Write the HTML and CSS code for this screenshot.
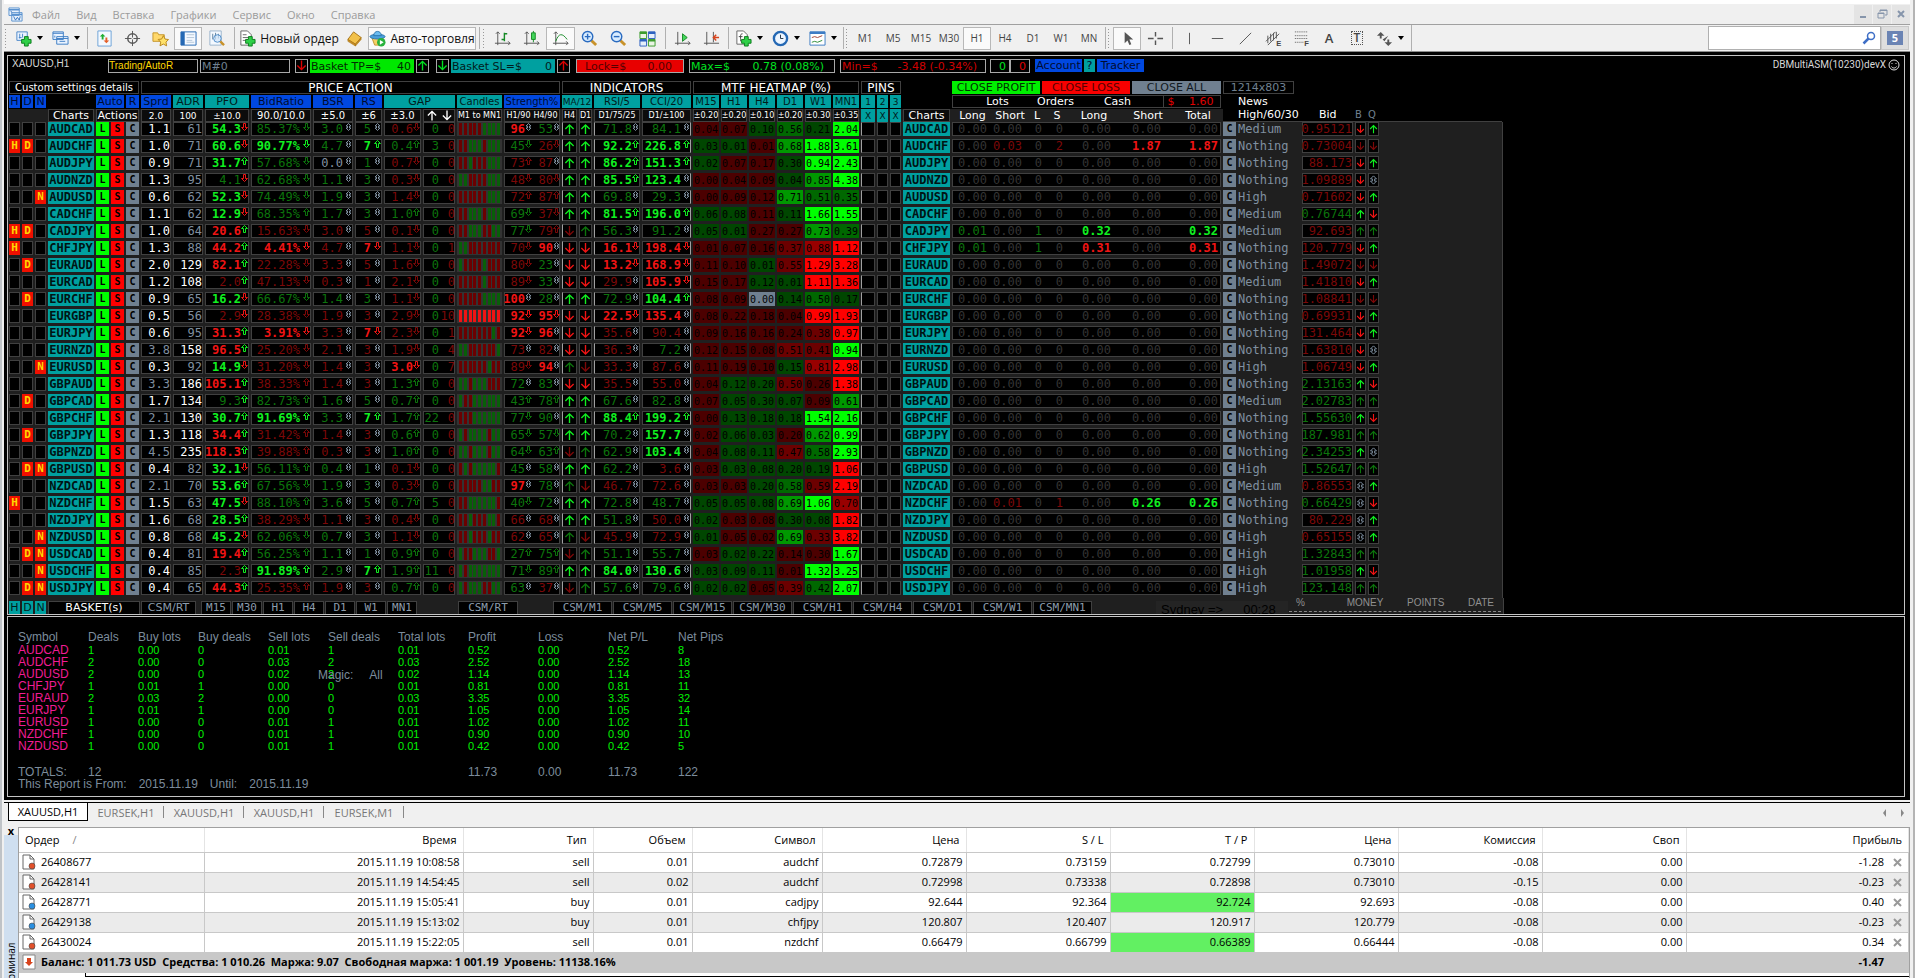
FILE: index.html
```html
<!DOCTYPE html>
<html lang="ru">
<head>
<meta charset="utf-8">
<title>XAUUSD,H1</title>
<link rel="stylesheet" href="styles.css">
</head>
<body>
<svg class="sprite" aria-hidden="true">
  <symbol id="up" viewBox="0 0 12 12"><path d="M6 11.500V1.500M1.500 6 6 1.500 10.500 6" fill="none" stroke="currentColor" stroke-width="1.500"/></symbol>
  <symbol id="down" viewBox="0 0 12 12"><path d="M6 .5V10.500M1.500 6 6 10.500 10.500 6" fill="none" stroke="currentColor" stroke-width="1.500"/></symbol>
  <symbol id="both" viewBox="0 0 12 12"><path d="M6 .5 10 4.500H7.500V7.500H10L6 11.500 2 7.500H4.500V4.500H2Z" fill="none" stroke="currentColor" stroke-width="1.300"/></symbol>
  <symbol id="hup" viewBox="0 0 7 8"><path d="M3.500 .5 6.500 3.500H4.500V7.500H2.500V3.500H.5Z" fill="none" stroke="currentColor"/></symbol>
  <symbol id="hdown" viewBox="0 0 7 8"><path d="M3.500 7.500 6.500 4.500H4.500V.5H2.500V4.500H.5Z" fill="none" stroke="currentColor"/></symbol>
  <symbol id="hboth" viewBox="0 0 7 8"><path d="M3.500 .5 6 3H4.500V5H6L3.500 7.500 1 5H2.500V3H1Z" fill="none" stroke="currentColor"/></symbol>
  <symbol id="plus" viewBox="0 0 12 12"><path d="M4 1h4v3h3v4H8v3H4V8H1V4h3Z" fill="#2fd048" stroke="#0b7a1c"/></symbol>
  <symbol id="lens" viewBox="0 0 18 18"><path d="m11 11 5 5" stroke="#c8922a" stroke-width="3"/><circle cx="7" cy="7" r="5.500" fill="#d8ecff" stroke="#2a6bc0" stroke-width="1.500"/></symbol>
</svg>

<nav class="menubar">
  <svg class="app" viewBox="0 0 16 16"><path d="M1 1h11v8H1zM4 6h11v9H4z" fill="#e8f1fc" stroke="#5a92cf"/><path d="M1 3h11M4 8h11" stroke="#5a92cf" stroke-width="1.500"/><path d="m6 10 2 4 2-3 2 3 1-4M3 4l1 2" fill="none" stroke="#3775bd"/></svg>
  <a href="#">Файл</a><a href="#">Вид</a><a href="#">Вставка</a><a href="#">Графики</a><a href="#">Сервис</a><a href="#">Окно</a><a href="#">Справка</a>
  <span class="grow"></span>
  <button class="win" aria-label="Свернуть"><svg viewBox="0 0 12 12"><path d="M3 9h6" stroke="#8695ab" stroke-width="2"/></svg></button>
  <button class="win" aria-label="Восстановить"><svg viewBox="0 0 12 12"><path d="M4 4V2h7v5H9M2 5h6v5H2zM4 2.500h7M2 5.500h6" fill="none" stroke="#8695ab"/></svg></button>
  <button class="win" aria-label="Закрыть"><svg viewBox="0 0 12 12"><path d="m3 3 6 6m0-6-6 6" stroke="#8695ab" stroke-width="2"/></svg></button>
</nav>

<div class="toolbar">
  <i class="grip"></i>
  <button class="tb drop" aria-label="Новый график"><svg viewBox="0 0 18 18"><path d="M2 2h11v9H2z" fill="#eaf3ff" stroke="#4a86c8"/><path d="M5 4v5m3-5v4m-4 0h3" stroke="#4a86c8"/><use href="#plus" x="6" y="6" width="12" height="12"/></svg></button>
  <button class="tb drop" aria-label="Профили"><svg viewBox="0 0 18 18"><path d="M1 2h11v8H1zM5 7h12v8H5z" fill="#eaf3ff" stroke="#3d7cc4"/><path d="M1 3.500h11M5 9h12M8 12h6M3 6v2" stroke="#3d7cc4"/></svg></button>
  <i class="sep"></i>
  <button class="tb" aria-label="Обзор рынка"><svg viewBox="0 0 18 18"><path d="M2 1h14v16H2z" fill="#f4f9ff" stroke="#6ba2d8"/><path d="m7 4 3 3H8v3H6V7H4z" fill="#1fae33"/><path d="m11 14-3-3h2V8h2v3h2z" fill="#e5602a"/></svg></button>
  <button class="tb" aria-label="Окно данных"><svg viewBox="0 0 18 18"><circle cx="9" cy="9" r="5" fill="none" stroke="#555" stroke-width="1.500"/><path d="M9 1v7M9 10v7M1 9h7M10 9h7" stroke="#555"/></svg></button>
  <button class="tb" aria-label="Навигатор"><svg viewBox="0 0 18 18"><path d="M1 3h5l1 2h6v7H1z" fill="#ffd86b" stroke="#c5952a"/><path d="m12 6 1.800 3.600 3.700.5-2.700 2.700.7 4-3.500-1.900-3.500 1.900.7-4L6.500 10l3.700-.4z" fill="#ffe26b" stroke="#b8861a"/></svg></button>
  <button class="tb on" aria-label="Терминал"><svg viewBox="0 0 18 18"><path d="M1 2h16v14H1z" fill="#f4f9ff" stroke="#2468b4"/><path d="M1 2h4v14H1z" fill="#2468b4"/><path d="M7 5h8M7 8h8M7 11h6M7 13h8" stroke="#b4c6d8"/></svg></button>
  <button class="tb" aria-label="Тестер"><svg viewBox="0 0 18 18"><path d="M2 1h12v15H2z" fill="#f4f9ff" stroke="#9ab4cc"/><path d="M5 4v6m3-7v7m3-6v5" stroke="#5c7f9e"/><circle cx="10" cy="9" r="4" fill="#cfe4fa" fill-opacity=".7" stroke="#4f8cc9"/><path d="m13 12 4 4" stroke="#c8922a" stroke-width="2.500"/></svg></button>
  <i class="sep wide"></i>
  <button class="tb text order"><svg viewBox="0 0 18 18"><path d="M2 1h7l4 4v11H2z" fill="#fff" stroke="#666"/><path d="M4 5h4M4 8h6M4 11h3" stroke="#666"/><use href="#plus" x="6" y="6" width="12" height="12"/></svg>Новый ордер</button>
  <button class="tb" aria-label="MetaEditor"><svg viewBox="0 0 18 18"><path d="m8 2 8 6-6 7-8-5z" fill="#f2c14a" stroke="#a87416"/><path d="m2 10 8 5v2l-8-5zM10 15l6-7v2l-6 7z" fill="#c98e22" stroke="#a87416" stroke-width=".6"/></svg></button>
  <button class="tb text on auto"><svg viewBox="0 0 18 18"><path d="M3 8h12l-2 8H6z" fill="#f4cf63" stroke="#c09530"/><ellipse cx="9" cy="7" rx="8" ry="2.500" fill="#4aa0dc" stroke="#2a75ad"/><path d="M5 6c0-6 8-6 8 0z" fill="#6bbcf0" stroke="#2a75ad"/><circle cx="13" cy="13" r="4.500" fill="#28b23c"/><path d="m11.500 10.500 4 2.500-4 2.500z" fill="#fff"/></svg>Авто-торговля</button>
  <i class="sep"></i><i class="grip"></i>
  <button class="tb c29" aria-label="Бары"><svg viewBox="0 0 18 18"><path d="M4 2v14M1 14h16M2 4l2-2 2 2M15 12l2 2-2 2" fill="none" stroke="#555"/><path d="M11 3v9m-3-2h3m0-6h3" stroke="#168a26" stroke-width="1.500"/></svg></button>
  <button class="tb c29" aria-label="Свечи"><svg viewBox="0 0 18 18"><path d="M4 2v14M1 14h16M2 4l2-2 2 2M15 12l2 2-2 2" fill="none" stroke="#555"/><path d="M11 1v12" stroke="#168a26"/><path d="M9 3h4v7H9z" fill="#43d65a" stroke="#168a26"/></svg></button>
  <button class="tb c29 on" aria-label="Линия"><svg viewBox="0 0 18 18"><path d="M4 2v14M1 14h16M2 4l2-2 2 2M15 12l2 2-2 2" fill="none" stroke="#555"/><path d="M4 12c3-9 7-9 12-2" fill="none" stroke="#168a26"/></svg></button>
  <button class="tb c29" aria-label="Приблизить"><svg viewBox="0 0 18 18"><use href="#lens"/><path d="M7 4v6M4 7h6" stroke="#2a6bc0" stroke-width="1.500"/></svg></button>
  <button class="tb c29" aria-label="Отдалить"><svg viewBox="0 0 18 18"><use href="#lens"/><path d="M4 7h6" stroke="#2a6bc0" stroke-width="1.500"/></svg></button>
  <button class="tb c29" aria-label="Окна"><svg viewBox="0 0 18 18"><path d="M1 2h7v7H1zM10 10h7v7h-7z" fill="#e9f4e4" stroke="#3c9c2c"/><path d="M10 2h7v7h-7zM1 10h7v7H1z" fill="#e6effb" stroke="#2d62c0"/><path d="M1 3h7M10 11h7" stroke="#3c9c2c" stroke-width="2.500"/><path d="M10 3h7M1 11h7" stroke="#2d62c0" stroke-width="2.500"/></svg></button>
  <i class="sep"></i>
  <button class="tb c29" aria-label="Автопрокрутка"><svg viewBox="0 0 18 18"><path d="M4 2v14M1 14h16M15 12l2 2-2 2" fill="none" stroke="#555"/><path d="m9 4 5 4-5 4z" fill="#43d65a" stroke="#168a26"/></svg></button>
  <button class="tb c29" aria-label="Сдвиг графика"><svg viewBox="0 0 18 18"><path d="M4 2v14M1 14h16M11 2v11" fill="none" stroke="#555"/><path d="m17 8h-5m2-3-3 3 3 3" fill="none" stroke="#d8431c" stroke-width="1.500"/></svg></button>
  <i class="sep thin"></i>
  <button class="tb drop" aria-label="Индикаторы"><svg viewBox="0 0 18 18"><path d="M2 1h7l4 4v10H2z" fill="#fff" stroke="#666"/><path d="M8 4c-3 0-2 3-2 8M4 7h4" fill="none" stroke="#444"/><use href="#plus" x="6" y="6" width="12" height="12"/></svg></button>
  <button class="tb drop" aria-label="Периоды"><svg viewBox="0 0 18 18"><circle cx="9" cy="9" r="7" fill="#eef6ff" stroke="#2468b4" stroke-width="2.500"/><path d="M9 5v4h3" fill="none" stroke="#234"/></svg></button>
  <button class="tb drop" aria-label="Шаблоны"><svg viewBox="0 0 18 18"><path d="M1 2h16v14H1z" fill="#fff" stroke="#3d7cc4"/><path d="M1 3h16" stroke="#3d7cc4" stroke-width="2.500"/><path d="m3 8 3-1 3 1 5-2" fill="none" stroke="#a04030"/><path d="m3 13 3-1 3 1 5-2" fill="none" stroke="#2b8a34"/></svg></button>
  <i class="sep thin"></i><i class="grip"></i>
  <button class="tb">M1</button><button class="tb">M5</button><button class="tb">M15</button><button class="tb">M30</button><button class="tb on">H1</button><button class="tb">H4</button><button class="tb">D1</button><button class="tb">W1</button><button class="tb">MN</button>
  <i class="sep thin"></i><i class="grip"></i>
  <button class="tb on" aria-label="Курсор"><svg viewBox="0 0 18 18"><path d="M6 2v12l3-3 2 5 2-1-2-5h4z" fill="#555"/></svg></button>
  <button class="tb" aria-label="Перекрестие"><svg viewBox="0 0 18 18"><path d="M9 2v5M9 11v5M1 9h6M11 9h6" stroke="#555" stroke-width="1.500"/></svg></button>
  <i class="sep"></i>
  <button class="tb" aria-label="Вертикальная линия"><svg viewBox="0 0 18 18"><path d="M9 3v12" stroke="#555"/></svg></button>
  <button class="tb" aria-label="Горизонтальная линия"><svg viewBox="0 0 18 18"><path d="M3 9h12" stroke="#555"/></svg></button>
  <button class="tb" aria-label="Трендовая линия"><svg viewBox="0 0 18 18"><path d="M3 15 15 3" stroke="#555"/></svg></button>
  <button class="tb" aria-label="Канал"><svg viewBox="0 0 18 18"><path d="M1 12 11 2M3 16 15 4M3 6v8M6 4v8M9 3v8M12 2v7" fill="none" stroke="#555"/><text x="12" y="17" class="sub">E</text></svg></button>
  <button class="tb" aria-label="Фибоначчи"><svg viewBox="0 0 18 18"><path d="M2 2h14M2 6h14M2 9h14M2 13h9" stroke="#555" stroke-dasharray="1 1"/><text x="12" y="17" class="sub">F</text></svg></button>
  <button class="tb letter">A</button>
  <button class="tb letter"><span class="frame">T</span></button>
  <button class="tb drop" aria-label="Стрелки"><svg viewBox="0 0 18 18"><path d="m5 2 4 4-3 0v3H4V6H1zM13 17l-4-4h3v-3h2v3h3zM7 10l2 2 4-6" fill="#555"/></svg></button>
  <i class="sep last"></i>
  <span class="grow"></span>
  <label class="search"><input type="text" aria-label="Поиск"><svg viewBox="0 0 14 14"><circle cx="9" cy="5" r="3.500" fill="#fff" stroke="#3f6fc6" stroke-width="1.500"/><path d="m6.500 7.500-5 5" stroke="#3f6fc6" stroke-width="2.500"/></svg></label>
  <button class="msg" aria-label="Сообщения"><span>5</span></button>
</div>

<main class="chart">
  <section class="pane">
    <div class="status">
      <span class="sym">XAUUSD,H1</span>
      <span class="bx name">Trading/AutoR</span>
      <span class="bx magic">M#0</span>
      <button class="bx ar red"><svg><use href="#down"/></svg></button>
      <span class="bx tp"><b>Basket TP=$</b><b>40</b></span>
      <button class="bx ar green"><svg><use href="#up"/></svg></button>
      <button class="bx ar green second"><svg><use href="#down"/></svg></button>
      <span class="bx sl"><b>Basket SL=$</b><b>0</b></span>
      <button class="bx ar red"><svg><use href="#up"/></svg></button>
      <span class="bx lock"><b>Lock=$</b><b>0.00</b></span>
      <span class="bx max"><b>Max=$</b><b>0.78 (0.08%)</b></span>
      <span class="bx min"><b>Min=$</b><b>-3.48 (-0.34%)</b></span>
      <span class="pair"><span class="bx green">0</span><span class="bx red">0</span></span>
      <button class="lk">Account</button><button class="lk q">?</button><button class="lk">Tracker</button>
      <span class="grow"></span>
      <span class="ea">DBMultiASM(10230)devX</span>
      <svg class="smile" viewBox="0 0 12 12"><circle cx="6" cy="6" r="5" fill="none" stroke="#ddd"/><path d="M4 4v1M8 4v1M3.500 7.500c1 2 4 2 5 0" fill="none" stroke="#ddd"/></svg>
    </div>
    <table class="dash">
      <thead>
        <tr class="h1">
          <th class="s7 box small">Custom settings details</th><th class="s10 box">PRICE ACTION</th><th class="s4 box">INDICATORS</th><th class="s6 box">MTF HEATMAP (%)</th><th class="s3 box">PINS</th><th></th>
          <th class="close"><button class="cp">CLOSE PROFIT</button><button class="cl">CLOSE LOSS</button><button class="ca">CLOSE ALL</button></th>
          <th class="s2 box size">1214x803</th>
        </tr>
        <tr class="h2">
          <th class="b">H</th><th class="b">D</th><th class="b">N</th><th></th><th class="s2 b">Auto</th><th class="b">R</th><th class="b">Sprd</th><th class="t">ADR</th><th class="t">PFO</th><th class="b">BidRatio</th><th class="b">BSR</th><th class="b">RS</th><th class="s2 t">GAP</th><th class="t small">Candles</th><th class="b small">Strength%</th><th class="s2 t tiny">MA/12</th><th class="t small">RSI/5</th><th class="t small">CCI/20</th><th class="t small">M15</th><th class="t small">H1</th><th class="t small">H4</th><th class="t small">D1</th><th class="t small">W1</th><th class="t small">MN1</th><th class="t tiny">1</th><th class="t tiny">2</th><th class="t tiny">3</th><th></th>
          <th class="box groups"><span>Lots</span><span>Orders</span><span>Cash</span><span class="sum"><i>$</i><i>1.60</i></span></th>
          <th></th><th class="left">News</th>
        </tr>
        <tr class="h3">
          <th class="s3"></th><th class="box">Charts</th><th class="s3 box">Actions</th><th class="box tiny">2.0</th><th class="box tiny">100</th><th class="box tiny">±10.0</th><th class="box small">90.0/10.0</th><th class="box small">±5.0</th><th class="box small">±6</th><th class="box small">±3.0</th>
          <th class="box duo"><svg><use href="#up"/></svg><svg><use href="#down"/></svg></th>
          <th class="box micro">M1 to MN1</th><th class="box duo micro"><span>H1/90</span><span>H4/90</span></th><th class="box micro">H4</th><th class="box micro">D1</th><th class="box micro">D1/75/25</th><th class="box micro">D1/±100</th><th class="box micro">±0.20</th><th class="box micro">±0.20</th><th class="box micro">±0.10</th><th class="box micro">±0.20</th><th class="box micro">±0.30</th><th class="box micro">±0.35</th><th class="t tiny">X</th><th class="t tiny">X</th><th class="t tiny">X</th><th class="box">Charts</th>
          <th class="lab"><span>Long</span><span>Short</span><span>L</span><span>S</span><span>Long</span><span>Short</span><span>Total</span></th>
          <th class="tail"><span>High/60/30</span><span>Bid</span><span>B</span><span>Q</span></th>
        </tr>
      </thead>
      <tbody id="pairs"></tbody>
    </table>
    <div class="foot">
      <button class="t k">H</button><button class="t k">D</button><button class="t k">N</button>
      <button class="fb basket">BASKET(s)</button><button class="fb rt">CSM/RT</button>
      <span class="fgroup tf"><button class="fb">M15</button><button class="fb">M30</button><button class="fb">H1</button><button class="fb">H4</button><button class="fb">D1</button><button class="fb">W1</button><button class="fb">MN1</button></span>
      <button class="fb csmrt">CSM/RT</button>
      <span class="fgroup csm"><button class="fb">CSM/M1</button><button class="fb">CSM/M5</button><button class="fb">CSM/M15</button><button class="fb">CSM/M30</button><button class="fb">CSM/H1</button><button class="fb">CSM/H4</button><button class="fb">CSM/D1</button><button class="fb">CSM/W1</button><button class="fb">CSM/MN1</button></span>
      <span class="clock"><span>Sydney =&gt;</span><span>00:28</span></span>
      <span class="stats"><span>%</span><span>MONEY</span><span>POINTS</span><span>DATE</span></span>
    </div>
  </section>
  <section class="pane report">
    <table>
      <colgroup><col class="w70"><col class="w50"><col class="w60"><col class="w70"><col class="w60"><col class="w70"><col class="w70"><col class="w70"><col class="w70"><col class="w70"><col class="w70"></colgroup>
      <thead><tr><th>Symbol</th><th>Deals</th><th>Buy lots</th><th>Buy deals</th><th>Sell lots</th><th>Sell deals</th><th>Total lots</th><th>Profit</th><th>Loss</th><th>Net P/L</th><th>Net Pips</th></tr></thead>
      <tbody id="report"></tbody>
      <tfoot><tr><td>TOTALS:</td><td>12</td><td></td><td></td><td></td><td></td><td></td><td>11.73</td><td>0.00</td><td>11.73</td><td>122</td></tr></tfoot>
    </table>
    <p class="range"><span>This Report is From:</span><span>2015.11.19</span><span>Until:</span><span>2015.11.19</span></p>
    <p class="magicsel"><span>Magic:</span><span>All</span></p>
  </section>
</main>

<div class="tabs">
  <button class="active">XAUUSD,H1</button><button>EURSEK,H1</button><button>XAUUSD,H1</button><button>XAUUSD,H1</button><button>EURSEK,M1</button>
  <span class="grow"></span><span class="scroll"><svg viewBox="0 0 6 8"><path d="M4 0v8L1 4z" fill="#888"/></svg><svg viewBox="0 0 6 8"><path d="M2 0v8l3-4z" fill="#888"/></svg></span>
</div>

<section class="terminal">
  <div class="side"><button aria-label="Закрыть терминал">x</button><div class="title"><span>Терминал</span></div></div>
  <div class="grid">
    <table>
      <colgroup><col class="c1"><col class="c2"><col class="c3"><col class="c4"><col class="c3"><col class="c5"><col class="c5"><col class="c5"><col class="c5"><col class="c5"><col class="c5"><col></colgroup>
      <thead><tr><th class="ord">Ордер <em>/</em></th><th>Время</th><th>Тип</th><th>Объем</th><th>Символ</th><th>Цена</th><th>S / L</th><th>T / P</th><th>Цена</th><th>Комиссия</th><th>Своп</th><th>Прибыль</th></tr></thead>
      <tbody id="orders"></tbody>
      <tfoot><tr><td colspan="11"><svg class="doc" viewBox="0 0 14 16"><path d="M1 1h12v14H1z" fill="#fff" stroke="#888"/><path d="M5 4h4v4h2l-4 4-4-4h2z" fill="#d8431c"/></svg>Баланс: 1 011.73 USD&nbsp; Средства: 1 010.26&nbsp; Маржа: 9.07&nbsp; Свободная маржа: 1 001.19&nbsp; Уровень: 11138.16%</td><td class="pr">-1.47</td></tr></tfoot>
    </table>
    <div class="under"><span></span></div>
  </div>
</section>
<script src="app.js"></script>
</body>
</html>
```

FILE: styles.css
```css
* { box-sizing: border-box; }
body {
  margin: 0; height: 100vh; overflow: hidden; display: flex; flex-direction: column;
  border-left: 2px solid #bfc3c7; border-right: 2px solid #b4b4b4;
  padding: 0 3px 0 2px; background: #f0f0f0; color: #000;
  font-family: "Open Sans", "Noto Sans", sans-serif; font-size: 11px;
}
button { font: inherit; color: inherit; padding: 0; margin: 0; border: 0; background: none; line-height: inherit; }
a { color: inherit; text-decoration: none; }
i, em { font-style: normal; }
p { margin: 0; }
.sprite { position: absolute; width: 0; height: 0; }
.grow { flex: 1; }

.menubar { display: flex; flex: none; align-items: center; height: 25px; border-top: 4px solid #fff; border-bottom: 1px solid #a0a0a0; color: #9b9b9b; gap: 16px; padding-left: 4px; }
.menubar .app { width: 15px; height: 15px; margin-right: -7px; }
.win { width: 18px; height: 19px; background: #e4e4e4; margin-left: -15px; }
.win svg { width: 12px; height: 12px; display: block; margin: 0 auto; }

.toolbar { display: flex; flex: none; align-items: center; height: 27px; color: #444; border-bottom: 1px solid #8c8c8c; }
.grip { flex: none; width: 6px; height: 20px; background: radial-gradient(circle, #999 1px, transparent 1px) 0 0 / 3px 3px; background-clip: content-box; padding-right: 3px; }
.sep { flex: none; width: 6px; height: 22px; background: linear-gradient(#b0b0b0, #b0b0b0) center / 1px 100% no-repeat; }
.sep.wide { width: 8px; }
.sep.thin { width: 4px; }
.sep.last { height: 26px; }
.tb { flex: none; width: 28px; height: 23px; font-size: 10px; display: flex; align-items: center; justify-content: center; }
.tb svg { width: 17px; height: 17px; flex: none; }
.tb.c29 { width: 29px; }
.tb.on { background: #fafafa; border: 1px solid #b8b8b8; }
.tb.drop { width: 37px; gap: 5px; }
.tb.drop::after { content: ""; border: 3px solid transparent; border-top: 4px solid #000; border-bottom: 0; }
.tb.text { font-size: 12px; color: #111; gap: 4px; white-space: nowrap; }
.tb.order { width: 102px; }
.tb.auto { width: 108px; }
.tb.letter { font-size: 13px; font-weight: 600; }
.frame { border: 1px dotted #555; line-height: 12px; padding: 0 2px; font-size: 12px; }
.sub { font: bold 8px "Liberation Sans", sans-serif; fill: #444; }
.search { display: flex; align-items: center; width: 173px; height: 24px; background: #fff; border: 1px solid #b0b0b0; padding-right: 4px; }
.search input { flex: 1; min-width: 0; border: 0; background: none; outline: 0; }
.search svg { width: 14px; height: 14px; }
.msg { width: 28px; height: 24px; margin-right: 1px; background: #dedede; border: 1px solid #c8c8c8; }
.msg span { display: block; width: 16px; line-height: 14px; margin: 0 auto; background: #6b84b4; color: #fff; font-size: 11px; font-weight: bold; }

.chart { flex: 1; min-height: 0; display: flex; flex-direction: column; gap: 1px; background: #000; padding: 3px 5px 3px 3px; }
.pane { flex: none; border: 1px solid #c4c4c4; overflow: hidden; color: #fff; font-family: "DejaVu Sans", sans-serif; }

.status { display: flex; height: 14px; margin: 3px 4px 8px; line-height: 14px; font-size: 11px; gap: 2px; }
.sym, .name { font-family: "Liberation Sans", sans-serif; font-size: 10px; color: #d8d8d8; }
.status .sym { width: 94px; line-height: 10px; }
.status b { font-weight: normal; white-space: pre; }
.bx { border: 1px solid #a8a8a8; line-height: 13px; display: flex; justify-content: space-between; overflow: hidden; }
.status .name { width: 90px; color: #ffd700; line-height: 11px; }
.magic { width: 90px; color: #708090; padding-left: 1px; margin-right: 3px; }
.ar { width: 13px; height: 14px; flex: none; }
.ar svg { width: 11px; height: 11px; display: block; }
.second { margin-left: 5px; }
.tp, .sl { width: 104px; padding-right: 2px; color: #002b00; background: #00e800; border-color: #00e800; }
.sl { background: #00a0a0; border-color: #00a0a0; color: #001c1c; }
.lock { width: 108px; margin-left: 4px; padding: 0 11px 0 8px; background: #e80000; color: #500; }
.max { width: 146px; margin-left: 3px; padding: 0 10px 0 1px; color: #00e020; }
.min { width: 146px; margin-left: 3px; padding: 0 8px 0 1px; color: #d00000; }
.pair { display: flex; margin-left: 2px; margin-right: 3px; }
.pair .bx { width: 20px; justify-content: flex-end; padding-right: 3px; }
.green { color: #00e020; }
.red { color: #e00000; }
.lk { background: #0048e0; color: #000c30; font-size: 11px; width: 47px; height: 13px; }
.lk:first-of-type { width: 47px; }
.lk.q { background: #00a0a0; width: 11px; }
.ea { font: 10px/12px Roboto, sans-serif; color: #d8d8d8; }
.smile { width: 12px; height: 12px; }

.dash, .dash thead, .dash tbody { display: block; }
.dash tr {
  display: grid; column-gap: 2px; padding-left: 1px; width: max-content;
  grid-template-columns: 11px 11px 11px 46px 13px 13px 13px 30px 30px 44px 60px 40px 27px 37px 32px 45px 56px 15px 13px 46px 49px repeat(6, 26px) 14px 11px 11px 47px 269px 13px 62px 51px 11px 11px 121px;
}
.dash th, .dash td { padding: 0; font-weight: normal; white-space: nowrap; }
.dash th { font-size: 11px; height: 13px; line-height: 12px; display: flex; justify-content: center; align-items: center; }
.dash .box { border: 1px solid #404040; background: #000; }
.s2 { grid-column: span 2; } .s3 { grid-column: span 3; } .s4 { grid-column: span 4; }
.s6 { grid-column: span 6; } .s7 { grid-column: span 7; } .s10 { grid-column: span 10; }
.dash .h1 th { font-size: 12px; }
.dash .small, .dash .h1 .small { font-size: 10px; }
.dash .tiny { font-size: 9px; }
.dash .micro { font-size: 8px; }
.h1 { margin-bottom: 1px; }
.h2 { margin-bottom: 1px; }
.dash .b { background: #0048e0; color: #000c30; }
.t { background: #00a0a0; color: #001c1c; }
.dash .h1 .size { color: #708090; width: 71px; font-size: 11px; }
.dash .close { display: grid; grid-template-columns: 88px 88px 89px; gap: 2px; }
.close button { line-height: 13px; font-size: 11px; }
.cp { background: #00f000; color: #003000; } .cl { background: #f80000; color: #500; } .ca { background: #708090; color: #101820; }
.dash .groups { display: grid; grid-template-columns: 78px 50px 82px 58px; text-align: center; align-items: stretch; }
.groups span:first-child { padding-left: 12px; }
.groups span:nth-child(3) { padding-right: 8px; }
.sum { display: flex; justify-content: space-between; border-left: 1px solid #404040; padding: 0 7px 0 4px; color: #e00000; }
.dash .left { justify-content: flex-start; }
.h3, .dash tbody { background: #1f1f1f; }
.h3 .box { background: #0c0c0c; }
.duo { gap: 3px; }
.duo svg { width: 12px; height: 11px; }
.dash .lab { display: grid; grid-template-columns: 41px 34px 20px 20px 54px 54px 46px; text-align: center; justify-items: center; }
.dash .tail { grid-column: 33 / -1; background: #000; display: grid; grid-template-columns: 81px 36px 13px 1fr; justify-content: start; text-align: left; padding-left: 15px; border-bottom: 1px solid #404040; }
.tail span:nth-child(n+3) { color: #708090; font-size: 10px; }

.dash tbody, .foot { width: max-content; border-right: 1px solid #404040; }
.dash tbody tr { height: 17px; font: 12px/12px "DejaVu Sans Mono", monospace; }
.dash td { height: 14px; border: 1px solid #404040; background: #000; display: flex; justify-content: flex-end; }
.dash td button { width: 100%; font-size: 10px; font-weight: bold; line-height: 12px; color: #000; }
.dash td.pair-name { background: #00a0a0; border-color: #00a0a0; }
.dash td.pair-name button { font-size: 12px; color: #001414; }
.dash td.l { background: #0f0; border-color: #0f0; } .dash td.s { background: #f00; border-color: #f00; } .dash td.c { background: #708090; border-color: #708090; }
.dash td.flag { background: #f01000; border-color: #f01000; color: #ffd700; font-size: 11px; font-weight: bold; justify-content: center; }
.W { color: #fff; font-weight: bold; } .w { color: #8090a0; }
.G { color: #10f020; font-weight: bold; } .g { color: #0c740c; }
.R { color: #f01414; font-weight: bold; } .r { color: #7c0808; }
.z { color: #343434; }
.h { width: 7px; height: 8px; flex: none; }
.v { display: flex; justify-content: flex-end; }
td.bid .h { margin-left: 3px; } td.rs .h { margin-left: 3px; } td.bsr .h, td.cci .h { margin-left: 2px; }
.dash td.strength { display: grid; grid-template-columns: 27px 28px; justify-content: start; }
.dash td.cnt { display: grid; grid-template-columns: 15px 16px; text-align: right; justify-content: start; }
.dash td.candles { background: #333; border-color: #333; justify-content: space-between; padding: 0 1px; }
.candles i { width: 3px; background: #6b0000; }
.candles .g { background: #085f08; } .candles .R { background: #f01414; }
.dash td.ma { justify-content: center; }
.ma svg, .q svg { width: 11px; height: 12px; }
.dash td.lite { border-left-color: #a0a0a0; }
.dash td.rite { border-right-color: #a0a0a0; }
.dash td.heat { border: 0; font-size: 10px; line-height: 15px; justify-content: center; color: #000; }
.dash td.r1 { background: #4c0000; } .dash td.r2 { background: #6c0000; } .dash td.r3 { background: #980000; } .dash td.r4 { background: #f00; }
.dash td.g1 { background: #004600; } .dash td.g2 { background: #006800; } .dash td.g3 { background: #009800; } .dash td.g4 { background: #0f0; }
.dash td.n0 { background: #708090; }
.dash td.ords { display: grid; grid-template-columns: 34px 35px 20px 21px 48px 50px 57px; text-align: right; justify-content: start; }
.dash td.news { border: 0; background: none; color: #8090a0; justify-content: flex-start; line-height: 14px; }
.dash td.q { justify-content: center; }

.foot { display: flex; background: #1f1f1f; height: 16px; padding: 3px 0 0 1px; font: 11px/12px "DejaVu Sans Mono", monospace; color: #8c9cac; }
.foot .k { width: 11px; margin-right: 2px; font-family: "DejaVu Sans", sans-serif; }
.fb { background: #000; border: 1px solid #404040; border-bottom: 0; height: 13px; overflow: hidden; }
.basket { width: 92px; color: #fff; font-family: "DejaVu Sans", sans-serif; }
.rt { width: 55px; font-family: "DejaVu Sans", sans-serif; margin-left: 1px; }
.fgroup { display: flex; gap: 1px; }
.tf { margin-left: 5px; }
.tf .fb { width: 30px; }
.csmrt { width: 60px; margin-left: 41px; }
.csm { margin-left: 35px; }
.csm .fb { width: 59px; }
.clock { display: flex; gap: 20px; margin-left: 64px; width: 132px; padding-left: 5px; background: #242424; color: #000; font: 13px/18px "Liberation Sans", sans-serif; height: 13px; overflow: hidden; }
.stats { display: flex; justify-content: space-between; width: 212px; height: 11px; line-height: 4px; padding: 0 7px; margin-left: 1px; margin-right: 2px; font-family: "Liberation Sans", sans-serif; font-size: 10px; color: #909090; border-bottom: 1px dashed #888; }
.stats span:first-child { margin-right: 18px; }

.report { flex: 1; min-height: 0; position: relative; padding: 13px 0 0 10px; font: 12px/12px "Liberation Sans", sans-serif; color: #7c8c9c; }
.report table { border-collapse: collapse; table-layout: fixed; width: 680px; }
.w50 { width: 50px; } .w60 { width: 60px; } .w70 { width: 70px; }
.report th, .report td { padding: 0; text-align: left; font-weight: normal; height: 12px; }
.report th { height: 14px; }
.report tbody td { color: #00f000; font-size: 11px; }
.report tbody td:first-child { color: #f01c94; font-size: 12px; }
.report tfoot td { height: 26px; vertical-align: bottom; }
.range { display: flex; gap: 12px; }
.magicsel { position: absolute; left: 310px; top: 52px; display: flex; gap: 16px; }

.tabs { flex: none; display: flex; height: 25px; margin-top: 2px; border-top: 1px solid #000; color: #777; padding-left: 4px; align-items: flex-start; }
.tabs button { width: 80px; height: 18px; line-height: 17px; background: linear-gradient(#888, #888) right center / 1px 12px no-repeat; }
.tabs button:nth-child(2) { width: 76px; }
.tabs button.active { background: #fff; color: #000; border: 1px solid #000; border-top: 0; }
.scroll { display: flex; gap: 11px; padding: 6px 5px 0 0; }
.scroll svg { width: 6px; height: 8px; }

.terminal { flex: none; display: flex; height: 151px; }
.side { width: 14px; flex: none; display: flex; flex-direction: column; overflow: hidden; }
.side button { height: 13px; line-height: 8px; font-weight: bold; }
.title { flex: 1; background: #cfdff0; }
.title span { display: block; writing-mode: vertical-rl; rotate: 180deg; line-height: 14px; height: 57px; margin-top: 107px; font-size: 10px; text-align: right; }
.grid { flex: 1; background: #fff; border: 1px solid #a0a0a0; border-bottom: 0; }
.grid table { border-collapse: collapse; table-layout: fixed; width: 100%; }
.c1 { width: 185px; } .c2 { width: 259px; } .c3 { width: 130px; } .c4 { width: 99px; } .c5 { width: 144px; }
.grid th, .grid td { padding: 0 3px; text-align: right; font-weight: normal; height: 20px; line-height: 18px; border-right: 1px solid #c8c8c8; border-bottom: 1px solid #c8c8c8; white-space: nowrap; }
.grid th { height: 24px; padding: 0 6px; border-right-color: #e4e4e4; }
.grid th.ord, .grid td:first-child { text-align: left; }
.ord em { color: #888; margin-left: 10px; }
.grid tbody tr:nth-child(even) { background: #ebebeb; }
.doc { width: 14px; height: 16px; vertical-align: -4px; margin-right: 5px; }
.grid td.hit { background: #62f062; }
.grid td.pr { padding-right: 24px; }
.grid td.pr.x { padding-right: 6px; }
.pr button { width: 9px; margin-left: 9px; }
.pr svg { width: 9px; height: 9px; vertical-align: -1px; }
.grid tfoot td { background: #c8c8c8; border-color: #c8c8c8; font-weight: bold; }
.under { height: 4px; border-bottom: 1px solid #000; }
.under span { display: block; width: 67px; height: 4px; background: #fff; border-right: 1px solid #000; }
```

FILE: app.js
```js
// pair|flags|spread|adr|pfo|bid ratio|bsr|rs|gap|up dn|candles|strength x2|ma|rsi|cci|heatmap|news|bid|B Q
// Value codes: colour letter (G/R bright, g/r dim, w neutral), number, arrow (u, d, n).
const PAIRS = `
AUDCAD||1.1|61|G54.3d|g85.37d|g3.0|g5n|r0.6|0 0|rrrrrgggg|R96n g53n|UU|g71.8n|g84.1n|r.04 r.07 g.10 g.56 g.21 g2.04|Medium|r0.95121|DU
AUDCHF|HD|1.0|71|G60.6d|G90.77d|g4.7|G7u|g0.4|3 0|rrgggrggg|g45d r26d|UU|G92.2u|G226.8u|g.03 g.01 r.01 g.68 g1.88 g3.61|Nothing|r0.73004|dd
AUDJPY||0.9|71|G31.7u|g57.68d|w0.0|g1n|r0.7|0 0|rrgrrrggg|r73u r87n|UU|G86.2u|G151.3u|g.02 r.07 r.17 g.30 g.94 g2.43|Nothing|r88.173|DU
AUDNZD||1.3|95|g4.1d|g62.68d|g1.1|g3n|r0.3|0 0|ggrrrrggg|r48d r80d|UU|G85.5u|G123.4n|r.00 r.04 r.09 g.04 g.85 g4.38|Nothing|r1.09889|Dn
AUDUSD|N|0.6|62|G52.3d|g74.49d|g1.9|g3n|r1.4|0 0|rrrrrrggg|r72u r87u|UU|g69.8n|g29.3n|r.00 r.09 r.12 g.71 g.51 g.35|High|r0.71602|DU
CADCHF||1.1|62|G12.9d|g68.35u|g1.7|g3n|g1.0|0 0|rrgggrggg|g69d r37d|UU|G81.5u|G196.0u|g.06 g.08 r.11 g.11 g1.66 g1.55|Medium|g0.76744|UD
CADJPY|HD|1.0|64|R20.6u|r15.63d|r3.0|r5n|r0.1|0 0|rrgggrrgg|g77d r79u|du|g56.3n|g91.2n|g.05 g.01 r.27 r.27 g.73 g.39|Medium|r92.693|uu
CHFJPY|H|1.3|88|R44.2u|R4.41d|r4.7|R7d|r1.1|0 1|ggrrrrrrr|r70d R90n|DD|R16.1d|R198.4d|r.01 r.07 r.16 r.37 r.88 r1.12|Nothing|r120.779|DU
EURAUD|D|2.0|129|R82.1u|r22.28d|r3.3|r5n|r1.6|0 0|grrrrgrrr|r80d g23n|DD|R13.2d|R168.9d|r.11 r.10 g.01 r.55 r1.29 r3.28|Nothing|r1.49072|dd
EURCAD||1.2|108|r2.0u|r47.13d|r0.3|r1n|r2.1|0 0|rrrrrgrrr|r89d g33n|DD|r29.9n|R105.9d|r.15 r.17 g.12 g.01 r1.11 r1.36|Medium|r1.41810|DU
EURCHF|D|0.9|65|G16.2d|g66.67d|g1.4|g3n|r1.1|0 0|rrrrrgggg|R100n g28n|UU|g72.9n|G104.4u|r.08 r.09 n.00 g.14 g.50 g.17|Nothing|r1.08841|dd
EURGBP||0.5|56|r2.9d|r28.38d|r1.9|r3n|r2.9|0 10|RRRRRRRRR|R92d R95d|DD|R22.5d|R135.4n|r.08 r.22 r.18 r.04 r.99 r1.93|Nothing|r0.69931|DU
EURJPY||0.6|95|R31.3u|R3.91d|r3.3|R7d|r2.3|0 1|rrrrrrrgr|R92d R96n|DD|r35.6n|r90.4n|r.09 r.16 r.16 r.24 r.38 r.97|Nothing|r131.464|DU
EURNZD||3.8|158|R96.5u|r25.20d|r2.1|r3n|r1.9|0 4|ggrrrrrrg|r73n r82n|DD|r36.3n|g7.2n|r.12 r.15 r.08 r.51 r.41 g.94|Nothing|r1.63810|Dn
EURUSD|N|0.3|92|G14.9d|r31.20d|r1.4|r3n|R3.0|0 7|rrrrrrgrr|r89d R94n|ud|r33.3n|r87.6n|r.11 r.19 r.10 g.15 r.81 r2.98|High|r1.06749|DU
GBPAUD||3.3|186|R105.1u|r38.33u|r1.4|r3n|g1.3|0 0|ggrgggrrr|g72n g83n|DD|r35.5n|r55.0n|r.04 g.12 g.20 r.50 r.26 r1.38|Nothing|g2.13163|UD
GBPCAD|D|1.7|134|g9.3u|g82.73u|g1.6|g5n|g0.7|0 0|grrgggggg|g43u g78u|UU|g67.6n|g82.8n|r.07 g.05 g.30 g.07 r.09 g.61|Medium|g2.02783|uu
GBPCHF||2.1|130|G30.7u|G91.69u|g3.3|G7u|g1.7|22 0|rrrgggggg|g77d g90n|UU|G88.4u|G199.2u|r.00 g.13 g.18 g.18 g1.54 g2.16|Nothing|g1.55630|UD
GBPJPY|D|1.3|118|R34.4u|r31.42u|r1.4|r3n|g0.6|0 0|grggggrgg|g65d g57d|UU|g70.2n|G157.7n|r.02 g.06 g.03 r.20 g.62 g.99|Nothing|g187.981|uu
GBPNZD||4.5|235|R118.3u|r39.88u|r0.3|r3n|g1.0|0 0|ggrgggrgg|g64d g63u|du|g62.9n|G103.4n|r.04 g.08 g.11 r.47 g.58 g2.93|Nothing|g2.34253|Un
GBPUSD|DN|0.4|82|G32.1d|g56.11u|g0.4|g1n|r0.1|0 0|rgrgggggr|g45n g58n|UU|g62.2n|r3.6n|r.03 g.03 g.08 g.20 g.19 r1.06|High|g1.52647|uu
NZDCAD||2.1|70|G53.6u|g67.56d|g1.9|g3n|r0.3|0 0|rrrrrggrr|R97n g78n|ud|r46.7n|r72.6n|r.03 r.03 g.20 g.58 r.59 r2.19|Medium|r0.86553|nU
NZDCHF|H|1.5|63|G47.5d|g88.10u|g3.6|g5n|g0.7|5 0|rrggggggr|g40d g72n|UU|g72.8n|g48.7n|g.05 g.05 g.08 g.69 g1.06 r.70|Nothing|g0.66429|nD
NZDJPY||1.6|68|G28.5u|r38.29d|r1.1|r3n|r0.4|0 0|rrgrrrggr|r66n r68n|UU|g51.8n|r50.0n|g.02 r.03 r.08 g.30 g.08 r1.82|Nothing|r80.229|nU
NZDUSD|N|0.8|68|G45.2d|g62.06d|g0.7|g3n|r1.1|0 0|rrgrrrgrr|r62n r65n|ud|r45.9n|r72.9n|g.01 r.05 r.02 g.69 r.33 r3.82|High|r0.65155|nU
USDCAD|DN|0.4|81|R19.4u|g56.25u|g1.1|g1n|g0.9|0 0|grrgggrrg|g27u g75u|du|g51.1n|g55.7n|r.03 g.02 g.22 r.14 r.30 g1.67|High|g1.32843|uu
USDCHF|N|0.4|85|r2.3u|G91.89u|g2.9|G7u|g1.9|11 0|grggggggg|g71d g89u|UU|G84.0n|G130.6n|g.03 g.09 g.11 r.01 g1.32 g3.25|High|g1.01958|UD
USDJPY|DN|0.4|65|R44.3u|r25.35u|r1.9|r3n|g0.7|0 0|grgggrrgg|g63n r37n|du|g57.6n|g79.6n|g.02 g.02 r.05 r.39 g.42 g2.07|High|g123.148|uu`.trim().split('\n');

const POSITIONS = {
  AUDCHF: ['z0.00', 'r0.03', 'z0', 'r2', 'z0.00', 'R1.87', 'R1.87'],
  CADJPY: ['g0.01', 'z0.00', 'g1', 'z0', 'G0.32', 'z0.00', 'G0.32'],
  CHFJPY: ['g0.01', 'z0.00', 'g1', 'z0', 'R0.31', 'z0.00', 'R0.31'],
  NZDCHF: ['z0.00', 'r0.01', 'z0', 'r1', 'z0.00', 'G0.26', 'G0.26'],
};
const FLAT = ['z0.00', 'z0.00', 'z0', 'z0', 'z0.00', 'z0.00', 'z0.00'];

const use = (id, cls) => `<svg class="${cls}"><use href="#${id}"/></svg>`;
const hollow = (dir, cls) => use({ u: 'hup', d: 'hdown', n: 'hboth' }[dir], 'h ' + (dir === 'n' ? 'w' : cls));
const span = s => `<span class="${s[0]}">${s.slice(1)}</span>`;

function value(code, arrowClass, suffix = '') {
  const dir = code.slice(-1);
  return `<span class="v"><span class="${code[0]}">${code.slice(1, -1)}${suffix}</span>${hollow(dir, arrowClass || code[0])}</span>`;
}

function thin(c) {
  if (c === 'n') return use('both', 'w');
  return c.toLowerCase() === 'u' ? use('up', c === 'U' ? 'G' : 'g') : use('down', c === 'D' ? 'R' : 'r');
}

function heat(code) {
  const v = parseFloat(code.slice(1));
  const level = code[0] === 'n' ? 0 : v <= 0.3 ? 1 : v < 0.6 ? 2 : v < 0.9 ? 3 : 4;
  return `<td class="heat ${code[0]}${level}">${v.toFixed(2)}</td>`;
}

document.getElementById('pairs').innerHTML = PAIRS.map(line => {
  const [name, flags, spread, adr, pfo, bidr, bsr, rs, gap, cnt, bars, str, ma, rsi, cci, map, news, bid, bq] = line.split('|');
  const [s1, s2] = str.split(' ');
  const [up, dn] = cnt.split(' ');
  const nameCell = `<td class="pair-name"><button>${name}</button></td>`;
  return '<tr>' +
    ['H', 'D', 'N'].map(f => flags.includes(f) ? `<td class="flag">${f}</td>` : '<td></td>').join('') +
    nameCell +
    '<td class="l"><button>L</button></td><td class="s"><button>S</button></td><td class="c"><button>C</button></td>' +
    `<td class="${spread <= 2 ? 'W' : 'w'}">${spread}</td><td class="${adr > 100 ? 'W' : 'w'}">${adr}</td>` +
    `<td>${value(pfo, pfo.endsWith('u') ? 'G' : 'R')}</td>` +
    `<td class="bid">${value(bidr, '', '%')}</td>` +
    `<td class="bsr">${value(bsr + 'n')}</td><td class="rs">${value(rs)}</td>` +
    `<td>${value(gap + (gap[0] === 'g' ? 'u' : 'd'))}</td>` +
    `<td class="cnt"><span class="g">${up}</span><span class="r">${dn}</span></td>` +
    `<td class="candles">${[...bars].map(b => `<i class="${b}"></i>`).join('')}</td>` +
    `<td class="strength">${value(s1)}${value(s2)}</td>` +
    `<td class="ma lite">${thin(ma[0])}</td><td class="ma">${thin(ma[1])}</td>` +
    `<td class="lite">${value(rsi)}</td><td class="cci rite">${value(cci)}</td>` +
    map.split(' ').map(heat).join('') +
    '<td class="lite"></td><td></td><td></td>' + nameCell +
    `<td class="ords">${(POSITIONS[name] || FLAT).map(span).join('')}</td>` +
    `<td class="c"><button>C</button></td><td class="news">${news}</td>` +
    `<td class="${bid[0]}">${bid.slice(1)}</td><td class="q">${thin(bq[0])}</td><td class="q">${thin(bq[1])}</td></tr>`;
}).join('');

const REPORT = `AUDCAD 1 0.00 0 0.01 1 0.01 0.52 0.00 0.52 8
AUDCHF 2 0.00 0 0.03 2 0.03 2.52 0.00 2.52 18
AUDUSD 2 0.00 0 0.02 2 0.02 1.14 0.00 1.14 13
CHFJPY 1 0.01 1 0.00 0 0.01 0.81 0.00 0.81 11
EURAUD 2 0.03 2 0.00 0 0.03 3.35 0.00 3.35 32
EURJPY 1 0.01 1 0.00 0 0.01 1.05 0.00 1.05 14
EURUSD 1 0.00 0 0.01 1 0.01 1.02 0.00 1.02 11
NZDCHF 1 0.00 0 0.01 1 0.01 0.90 0.00 0.90 10
NZDUSD 1 0.00 0 0.01 1 0.01 0.42 0.00 0.42 5`;
document.getElementById('report').innerHTML = REPORT.split('\n')
  .map(r => `<tr>${r.split(' ').map(c => `<td>${c}</td>`).join('')}</tr>`).join('');

const ORDERS = `26408677|2015.11.19 10:08:58|sell|0.01|audchf|0.72879|0.73159|0.72799|0.73010|-0.08|0.00|-1.28
26428141|2015.11.19 14:54:45|sell|0.02|audchf|0.72998|0.73338|0.72898|0.73010|-0.15|0.00|-0.23
26428771|2015.11.19 15:05:41|buy|0.01|cadjpy|92.644|92.364|*92.724|92.693|-0.08|0.00|0.40
26429138|2015.11.19 15:13:02|buy|0.01|chfjpy|120.807|120.407|120.917|120.779|-0.08|0.00|-0.23
26430024|2015.11.19 15:22:05|sell|0.01|nzdchf|0.66479|0.66799|*0.66389|0.66444|-0.08|0.00|0.34`;
document.getElementById('orders').innerHTML = ORDERS.split('\n').map(r => {
  const c = r.split('|');
  const dot = c[2] === 'buy' ? '#2a8fe0' : '#e0502a';
  const icon = `<svg class="doc" viewBox="0 0 14 16"><path d="M1 1h7l4 4v10H1z" fill="#fff" stroke="#666"/><path d="M8 1v4h4" fill="none" stroke="#666"/><circle cx="10" cy="12" r="3" fill="${dot}" stroke="#444" stroke-width=".6"/></svg>`;
  return '<tr>' + c.map((v, i) => {
    if (i === 0) return `<td>${icon}${v}</td>`;
    if (i === 11) return `<td class="pr x">${v}<button aria-label="Закрыть ордер"><svg viewBox="0 0 9 9"><path d="m1 1 7 7m0-7-7 7" stroke="#999" stroke-width="2"/></svg></button></td>`;
    return v[0] === '*' ? `<td class="hit">${v.slice(1)}</td>` : `<td>${v}</td>`;
  }).join('') + '</tr>';
}).join('');
```
